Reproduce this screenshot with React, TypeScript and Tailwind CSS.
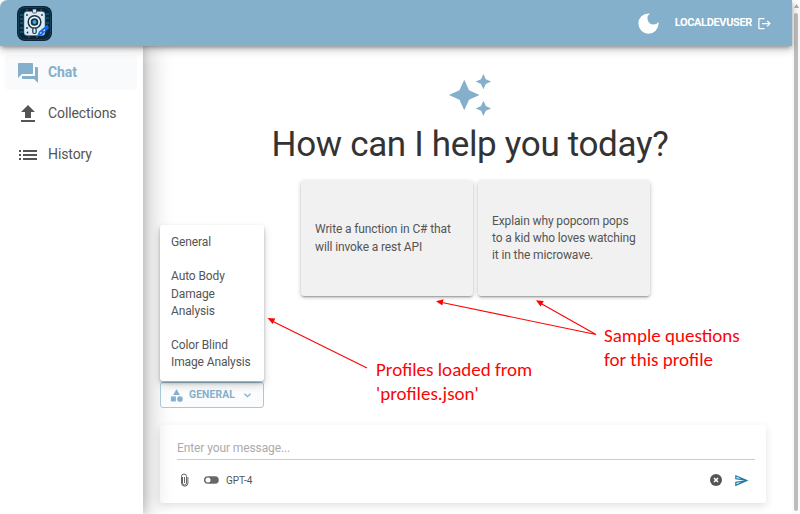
import React from "react";
import {
  MdForum,
  MdFileUpload,
  MdList,
  MdDarkMode,
  MdLogout,
  MdAutoAwesome,
  MdCategory,
  MdOutlineSend,
} from "react-icons/md";

function Logo() {
  return (
    <svg className="h-[35px] w-[35px]" viewBox="0 0 35 35">
      <rect width="35" height="35" rx="8" fill="#0b2438" />
      <rect x="1.5" y="1.5" width="32" height="32" rx="7" fill="none" stroke="#12405a" strokeWidth="1" />
      <path d="M3 9h3M3 13h3M3 17h3M3 22h3M3 26h3M29 8h3M29 12h3M29 17h3M10 3v2M24 3v2M12 32v-2M20 32v-2" stroke="#1d7899" strokeWidth="1" />
      <rect x="7" y="5.500" width="21" height="24" rx="3" fill="#dfe9ee" stroke="#2c8fb4" strokeWidth="0.600" />
      <rect x="15.500" y="3" width="4" height="4" rx="1" fill="#dce8ee" stroke="#12354c" strokeWidth="0.700" />
      <circle cx="17.500" cy="16" r="6.300" fill="#f2f7f9" stroke="#12354c" strokeWidth="1.500" />
      <circle cx="17.500" cy="16" r="2.900" fill="#35afd2" stroke="#12354c" strokeWidth="1.900" />
      <rect x="15.800" y="22" width="3.400" height="5.500" rx="1.500" fill="#dce8ee" stroke="#12354c" strokeWidth="1.200" />
      <circle cx="10" cy="9" r="0.900" fill="#12354c" />
      <circle cx="25" cy="9" r="0.900" fill="#12354c" />
      <circle cx="10" cy="22" r="0.900" fill="#12354c" />
      <circle cx="10.500" cy="26.500" r="0.900" fill="#12354c" />
      <path d="M20 30.500l2-5 8.500-7 1.500 3.500-7 7z" fill="#1268ec" />
      <path d="M23 27.500l1.500-1.200M26.500 25l1.500-1.200" stroke="#b4dcff" strokeWidth="1.200" />
    </svg>
  );
}

const navigation = [
  { label: "Chat", Icon: MdForum, active: true },
  { label: "Collections", Icon: MdFileUpload, active: false },
  { label: "History", Icon: MdList, active: false },
];

function Header() {
  return (
    <header className="relative z-20 flex h-[46px] shrink-0 items-center rounded-tl-lg bg-[#84b0cb] pr-[20px] pl-[17px] text-white shadow-[0_2px_4px_-1px_rgba(0,0,0,.35),0_4px_8px_rgba(0,0,0,.22)]">
      <Logo />
      <MdDarkMode className="ml-auto h-[27px] w-[27px]" />
      <span className="ml-[13px] text-[11px] font-bold tracking-[-0.350px]">LOCALDEVUSER</span>
      <MdLogout className="ml-[5px] h-[15px] w-[15px]" />
    </header>
  );
}

function Sidebar() {
  return (
    <nav className="relative z-10 flex w-[143px] shrink-0 flex-col gap-[6px] bg-white pt-[9px] pr-[6px] pl-[5px] shadow-[3px_0_6px_rgba(0,0,0,.1),8px_0_22px_rgba(0,0,0,.2)]">
      {navigation.map(({ label, Icon, active }) => (
        <div
          key={label}
          className={
            active
              ? "flex h-[35px] items-center gap-[8px] rounded bg-[#f8fafc] pl-[11px] font-bold text-[#84b0cb]"
              : "flex h-[35px] items-center gap-[8px] rounded pl-[11px] text-[#555]"
          }
        >
          <Icon className="h-[24px] w-[24px]" />
          <span className="text-[14px] tracking-[-0.100px]">{label}</span>
        </div>
      ))}
    </nav>
  );
}

function Question({ lines }: { lines: string[] }) {
  return (
    <div className="flex h-[115px] w-[172px] flex-col justify-center rounded-[3px] bg-[#f1f1f1] pl-[14px] text-[12px] leading-[17.300px] tracking-[-0.120px] whitespace-nowrap text-[#555] shadow-[0_2px_2px_-1px_rgba(0,0,0,.3),0_1px_4px_rgba(0,0,0,.25)]">
      {lines.map((line) => (
        <span key={line}>{line}</span>
      ))}
    </div>
  );
}

function Composer() {
  return (
    <section className="mt-[17px] flex h-[78px] w-[606px] flex-col rounded-[3px] bg-white/85 pr-[11px] pl-[17px] shadow-[0_3px_9px_rgba(0,0,0,.12)]">
      <div className="flex h-[35px] shrink-0 items-end border-b border-[#ccc] pb-[2px] text-[12px] leading-[18px] tracking-[-0.100px] text-[#ababab]">
        Enter your message...
      </div>
      <div className="flex h-[40px] items-center text-[#555]">
        <svg className="ml-[3px] h-[14px] w-[9px]" viewBox="0 0 9 14" fill="none" stroke="currentColor" strokeWidth="0.900">
          <path d="M2.500 4v6a2 2 0 0 0 4 0V3.500a2.500 2.500 0 0 0-5 0V10a3.200 3.200 0 0 0 6.400 0V4M4.500 4v6" />
        </svg>
        <svg className="ml-[15px] h-[8px] w-[15px]" viewBox="0 0 15 8">
          <rect y="0.200" width="14.800" height="7.600" rx="3.800" fill="#686868" />
          <circle cx="4" cy="4" r="2.500" fill="white" />
        </svg>
        <span className="ml-[7px] text-[10px]">GPT-4</span>
        <svg className="ml-auto h-[12px] w-[12px]" viewBox="0 0 12 12">
          <circle cx="6" cy="6" r="6" fill="#555" />
          <path d="M4 4l4 4M8 4l-4 4" stroke="white" strokeWidth="1.600" />
        </svg>
        <MdOutlineSend className="mr-[6px] ml-[12px] h-[15px] w-[15px] text-[#1c7ba5]" />
      </div>
    </section>
  );
}

function ProfileMenu() {
  return (
    <div className="absolute bottom-[27px] left-0 flex h-[156px] w-[104px] flex-col gap-[17px] rounded-[3px] bg-white pt-[9px] pl-[11px] text-[12px] leading-[17.300px] tracking-[-0.120px] whitespace-nowrap text-[#555] shadow-[0_2px_3px_rgba(0,0,0,.24),0_4px_9px_rgba(0,0,0,.18)]">
      <div>General</div>
      <div>Auto Body<br />Damage<br />Analysis</div>
      <div>Color Blind<br />Image Analysis</div>
    </div>
  );
}

function Annotations() {
  return (
    <>
      <svg className="pointer-events-none absolute inset-0 z-30 h-[514px] w-[800px]" viewBox="0 0 800 514">
        <g stroke="#fa0505" strokeWidth="1.150" fill="none">
          <path d="M367 368L273 321.500M442 302.500L596 334.500L541 303.500" />
        </g>
        <g fill="#fa0505">
          <path d="M267.500 318l7.800.500-2.600 5.500zM436 301.200l7.500-2-1.200 6.400zM536 300.300l7.800.600-3.200 5.700z" />
        </g>
      </svg>
      <div className="absolute top-[358px] left-[376px] z-30 font-['Carlito','Lato',sans-serif] text-[19px] leading-[24px] whitespace-nowrap text-[#fa0505]">
        Profiles loaded from<br />'profiles.json'
      </div>
      <div className="absolute top-[324px] left-[604px] z-30 font-['Carlito','Lato',sans-serif] text-[19px] leading-[24px] whitespace-nowrap text-[#fa0505]">
        Sample questions<br />for this profile
      </div>
    </>
  );
}

export default function App() {
  return (
    <div className="relative flex h-[514px] w-[800px] overflow-hidden bg-white font-['Roboto',sans-serif]">
      <div className="flex w-[792px] flex-col">
        <Header />
        <div className="flex min-h-0 flex-1">
          <Sidebar />
          <main className="flex flex-1 flex-col pl-[17px]">
            <div className="flex w-[620px] flex-col items-center pt-[26px]">
              <MdAutoAwesome className="h-[46px] w-[46px] text-[#84b0cb]" />
              <h1 className="mt-[6px] text-[35px] leading-[42px] font-normal tracking-[-0.330px] whitespace-nowrap text-[#333]">
                How can I help you today?
              </h1>
              <div className="mt-[15px] flex gap-[5px] pl-[11px]">
                <Question lines={["Write a function in C# that", "will invoke a rest API"]} />
                <Question lines={["Explain why popcorn pops", "to a kid who loves watching", "it in the microwave."]} />
              </div>
            </div>
            <div className="relative z-10 mt-[86px] w-[104px]">
              <ProfileMenu />
              <button className="flex h-[26px] w-[104px] items-center rounded-[3px] border border-[#a8c8dc] bg-[#fafcfd] pl-[8px] text-[#84b0cb]">
                <MdCategory className="h-[15px] w-[15px]" />
                <span className="ml-[5px] text-[10.300px] font-bold tracking-[0.150px]">GENERAL</span>
                <svg className="ml-[9px] h-[5px] w-[7px]" viewBox="0 0 7 5" fill="none" stroke="currentColor" strokeWidth="1.300">
                  <path d="M.5 .7L3.500 3.700L6.500 .7" />
                </svg>
              </button>
            </div>
            <Composer />
          </main>
        </div>
      </div>
      <div className="flex w-2 flex-col items-center rounded-tr-lg bg-[#fafafa]">
        <svg className="mt-[4px] h-[4px] w-[5px]" viewBox="0 0 5 4">
          <path d="M2.500 0L5 4H0z" fill="#aaa" />
        </svg>
        <div className="mt-[5px] h-[498px] w-[4px] rounded-full bg-[#bcbcbc]" />
      </div>
      <Annotations />
    </div>
  );
}
